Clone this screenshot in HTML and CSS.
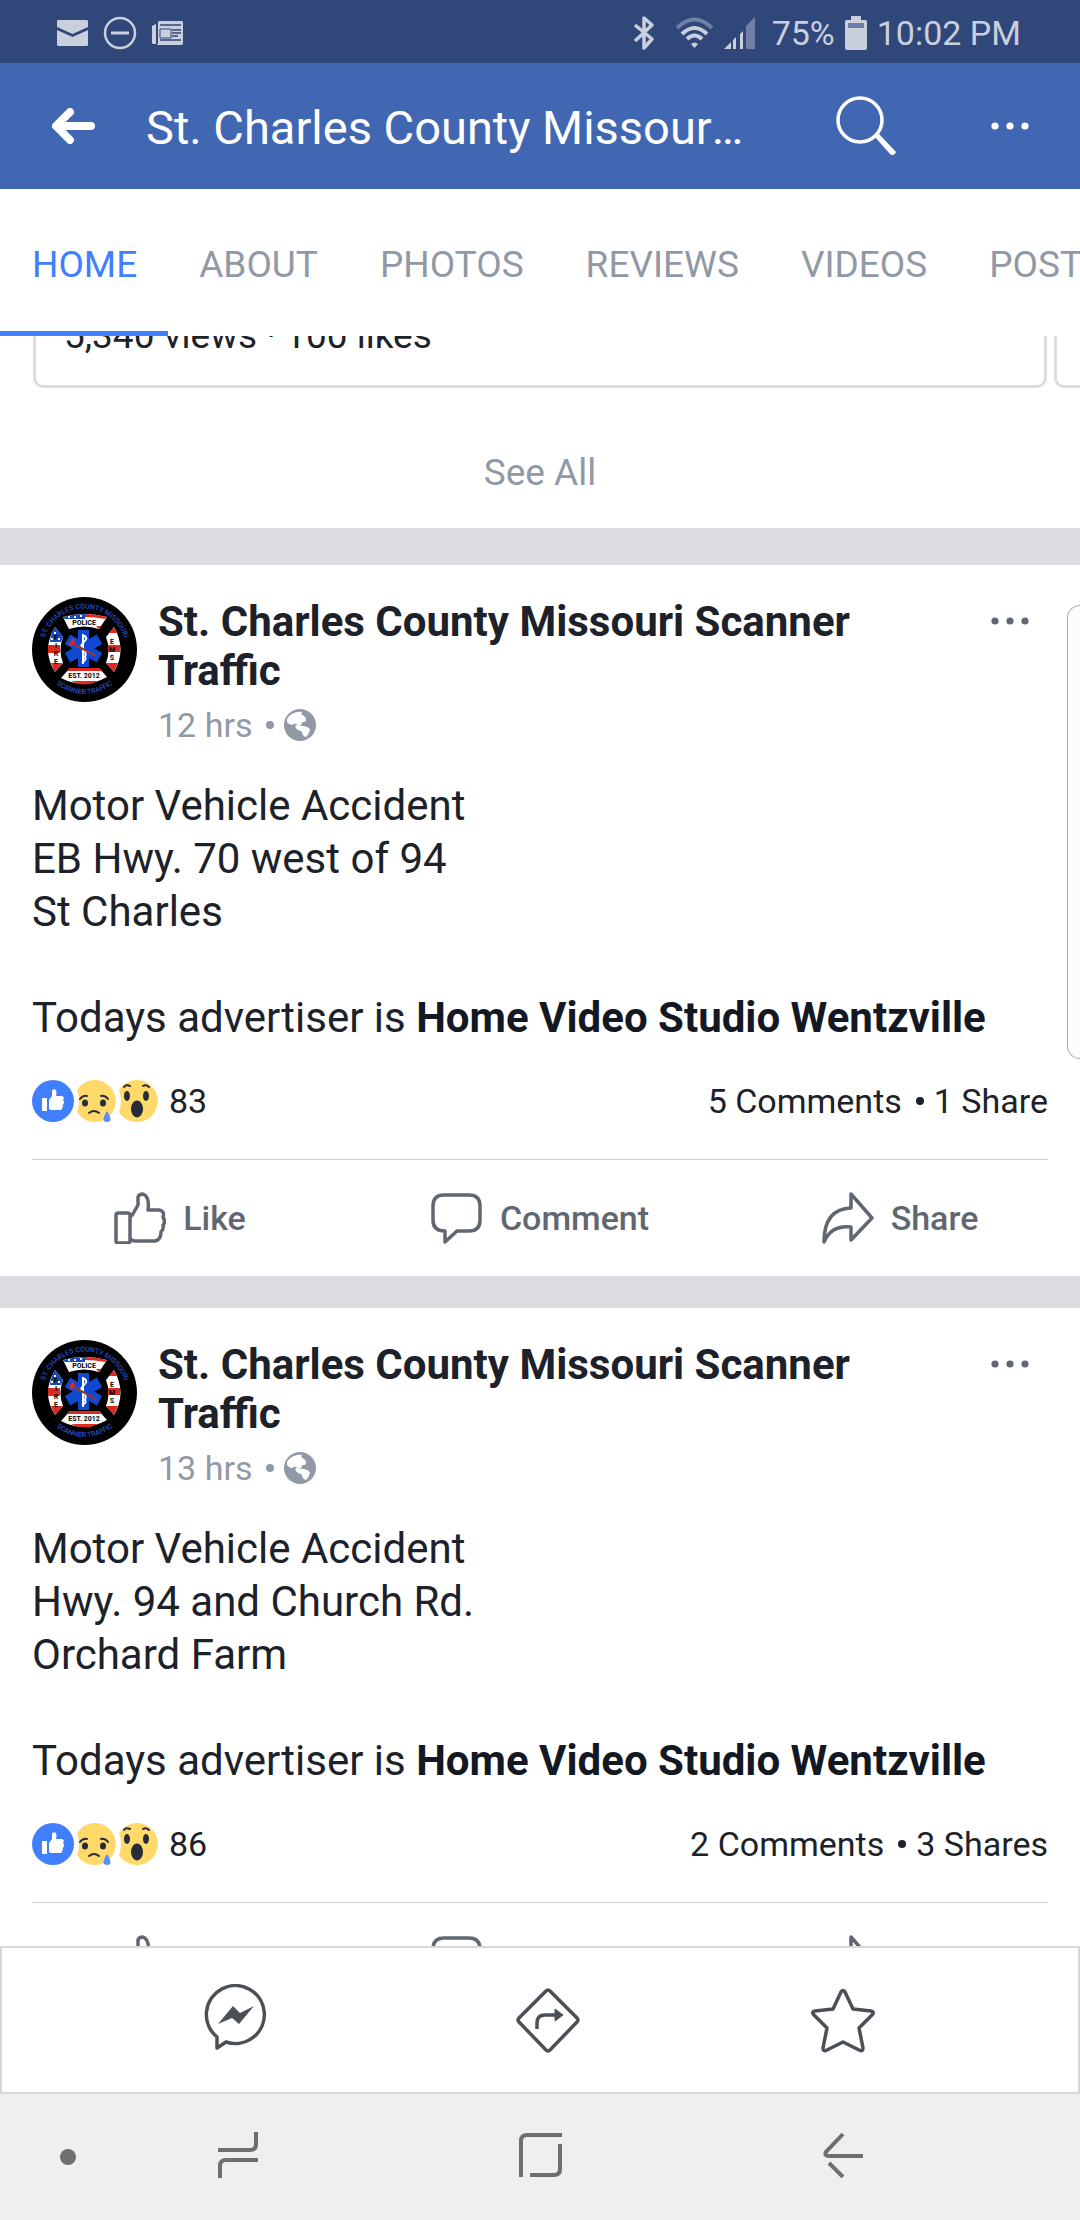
FILE: index.html
```html
<!DOCTYPE html>
<html lang="en">
<head>
<meta charset="utf-8">
<meta name="viewport" content="width=device-width, initial-scale=1">
<title>St. Charles County Missouri Scanner Traffic</title>
<link rel="stylesheet" href="styles.css">
</head>
<body>
<svg class="sprite" aria-hidden="true">
  <defs>
    <path id="arc-top" d="M11 53A41.500 41.500 0 0 1 94 53"/>
    <path id="arc-bottom" d="M16 78A44.500 44.500 0 0 0 89 78"/>
  </defs>
  <symbol id="badge" viewBox="0 0 105 105">
    <circle cx="52.500" cy="52.500" r="52.500" fill="#000"/>
    <path d="M31 20Q52 14 75 20L67 32Q52 27 37 32Z" fill="#fff"/>
    <path d="M31 20Q42 17 53 17V22H33Z" fill="#1649c0"/>
    <path d="M53 17Q64 17 75 20L73 22Q63 20 53 20ZM64 29H69L67 32Z" fill="#dc2a1c"/>
    <path d="M36 20h2M42 20h2M48 19h2" stroke="#fff" stroke-width="2"/>
    <path d="M29 81L38 71H67L75 80Q52 93 29 81Z" fill="#fff"/>
    <path d="M35 74L38 71H67L70 74ZM39 84H66Q53 91 39 84Z" fill="#dc2a1c"/>
    <path d="M23 30L31 40Q26 53 31 66L23 75Q9 53 23 30Z" fill="#fff"/>
    <path d="M23 30L31 40L29 45H18Q19 36 23 30ZM21 70H27L23 75Z" fill="#1649c0"/>
    <path d="M16 48H28V56H16ZM19 66H31L23 75Z" fill="#dc2a1c"/>
    <path d="M22 36h2M19 42h2M26 42h2" stroke="#fff" stroke-width="2"/>
    <path d="M82 30L74 40Q79 53 74 66L82 75Q95 53 82 30Z" fill="#fff"/>
    <path d="M82 30L77 36H85ZM76 48H88V55H76ZM74 66H86L82 75Z" fill="#dc2a1c"/>
    <g fill="#1148d2">
      <rect x="46" y="33" width="11" height="37"/>
      <rect x="46" y="33" width="11" height="37" transform="rotate(60 51.500 51.500)"/>
      <rect x="46" y="33" width="11" height="37" transform="rotate(120 51.500 51.500)"/>
    </g>
    <path d="M51 37V67M51 38Q57 41 52 45T51 52T53 60Q55 63 50 65" fill="none" stroke="#fff" stroke-width="2"/>
    <path d="M38 45L64 59" stroke="#8d3b3a" stroke-width="2"/>
    <path d="M37 48L41 41L43 45L40 49Z" fill="#dc2a1c"/>
  </symbol>
  <symbol id="globe" viewBox="0 0 32 32">
    <circle cx="16" cy="16" r="16" fill="#9299a6"/>
    <path d="M3 10C6 5 12 2 18 3C16 5 19 6 21 8C23 11 22 13 19 13C16 14 19 15 17 16C15 17 12 14 9 15C10 17 5 16 3 13Z" fill="#fff"/>
    <path d="M12 16C15 15 16 17 18 17C22 17 26 19 26 21C25 24 24 26 22 28C18 27 19 24 17 22C13 21 10 18 12 16Z" fill="#fff"/>
  </symbol>
  <symbol id="dots" viewBox="0 0 40 10">
    <circle cx="5" cy="5" r="3.600"/><circle cx="20" cy="5" r="3.600"/><circle cx="35" cy="5" r="3.600"/>
  </symbol>
  <symbol id="r-like" viewBox="0 0 42 42">
    <circle cx="21" cy="21" r="21" fill="#4080ff"/>
    <path d="M10 18h5v13h-5ZM17 20L20 16V11Q21 8 24 10Q25 13 24 16H30Q33 17 31 20Q33 22 31 25Q31 28 29 30H19L17 29Z" fill="#fff"/>
  </symbol>
  <symbol id="r-sad" viewBox="0 0 42 42">
    <path d="M3 10A21 21 0 1 1 3 32Q7 21 3 10Z" fill="#ffda6b"/>
    <path d="M6 19Q9 15 13 16M34 19Q31 15 27 16M15 33Q20 29 25 33" fill="none" stroke="#262c38" stroke-width="2" stroke-linecap="round"/>
    <ellipse cx="11" cy="23" rx="3" ry="3.500" fill="#262c38"/><ellipse cx="29" cy="23" rx="3" ry="3.500" fill="#262c38"/>
    <path d="M33 31Q40 42 33 42Q26 42 33 31Z" fill="#5890ff"/>
  </symbol>
  <symbol id="r-wow" viewBox="0 0 42 42">
    <path d="M3 10A21 21 0 1 1 3 32Q7 21 3 10Z" fill="#ffda6b"/>
    <path d="M8 7Q10 4 14 6M33 7Q30 4 27 6" fill="none" stroke="#262c38" stroke-width="2" stroke-linecap="round"/>
    <ellipse cx="11" cy="16" rx="3" ry="5" fill="#262c38"/><ellipse cx="30" cy="16" rx="3" ry="5" fill="#262c38"/>
    <ellipse cx="21" cy="29" rx="6" ry="8.500" fill="#262c38"/>
  </symbol>
  <symbol id="a-like" viewBox="0 0 52 52">
    <path d="M4 21H13Q16 21 16 23V49Q16 51 14 51H4Q2 51 2 49V23Q2 21 4 21ZM16 25Q19 23 20 20L24 13V5Q25 2 29 2Q36 5 34 18H45Q51 19 49 25Q52 30 49 33Q50 37 47 40Q47 48 41 49H20L16 47" fill="none" stroke="#616770" stroke-width="3.500" stroke-linejoin="round"/>
  </symbol>
  <symbol id="a-comment" viewBox="0 0 52 52">
    <path d="M13 3H38Q49 3 49 14V28Q49 39 38 39H26L14 50V39Q2 39 2 28V14Q2 3 13 3Z" fill="none" stroke="#616770" stroke-width="3.500" stroke-linejoin="round"/>
  </symbol>
  <symbol id="a-share" viewBox="0 0 52 52">
    <path d="M29 2L50 26L29 48V35Q9 33 2 50Q2 17 29 16Z" fill="none" stroke="#616770" stroke-width="3.500" stroke-linejoin="round"/>
  </symbol>
</svg>

<div class="screen">
  <div class="status">
    <div class="status-side">
      <svg width="31" height="26" viewBox="0 0 31 26"><path d="M0 1Q0 0 1 0H30L31 1V7L15.500 14L0 7ZM0 10L15.500 17L31 10V25L30 26H1L0 25Z" fill="#cacfde"/></svg>
      <svg width="34" height="34" viewBox="0 0 34 34" fill="none" stroke="#cacfde" stroke-width="2.500"><circle cx="17" cy="17" r="15"/><path d="M8 17H26" stroke-width="3"/></svg>
      <svg width="31" height="24" viewBox="0 0 31 24"><path d="M0 5L4 3V23H1L0 22ZM6 1L7 0H30L31 1V23L30 24H5L6 22Z" fill="#cacfde"/><path d="M8 4H29M20 9H29M20 12H29M20 15H26M8 19H29" stroke="#30477a" stroke-width="1.500"/><path d="M8 8H19V17H8Z" fill="#cacfde" stroke="#30477a"/></svg>
    </div>
    <div class="status-side">
      <svg class="bt" width="22" height="34" viewBox="0 0 22 34"><path d="M2 9L19 23L11 32V2L19 9L2 25" fill="none" stroke="#cacfde" stroke-width="3.500" stroke-linejoin="round"/></svg>
      <svg class="wifi" width="39" height="32" viewBox="0 0 39 32" fill="none" stroke="#cacfde" stroke-width="4"><path d="M2 11Q19.500 -6 37 11" stroke="#6f7fa6"/><path d="M7 17Q19.500 5 32 17M12 22Q19.500 15 27 22"/><path d="M16 27Q19.500 24 23 27L19.500 31Z" fill="#cacfde" stroke="none"/></svg>
      <svg class="signal" width="32" height="32" viewBox="0 0 32 32"><path d="M22 9L31 0V32H22Z" fill="#6f7fa6"/><path d="M0 32L7 25V32ZM9 23L12 20V32H9ZM16 17L19 14V32H16Z" fill="#cacfde"/></svg>
      <span class="level">75%</span>
      <svg class="battery" width="22" height="34" viewBox="0 0 22 34"><path d="M6 0H16V4H20Q22 4 22 6V32Q22 34 20 34H2Q0 34 0 32V6Q0 4 2 4H6Z" fill="#cacfde"/><path d="M3 7H19V12H3Z" fill="#6f7fa6"/></svg>
      <time>10:02 PM</time>
    </div>
  </div>

  <header class="appbar">
    <button class="icon-btn" aria-label="Back"><svg width="44" height="36" viewBox="0 0 44 36" fill="none" stroke="#fff" stroke-width="8" stroke-linecap="round" stroke-linejoin="round"><path d="M18 4L4 18L18 32M5 18H39"/></svg></button>
    <h1>St. Charles County Missouri Scanner Traffic</h1>
    <button class="icon-btn" aria-label="Search"><svg width="60" height="62" viewBox="0 0 60 62" fill="none" stroke="#fff"><circle cx="24" cy="25" r="22" stroke-width="3.500"/><path d="M39 42L54 59Q58 62 60 57L43 39Z" fill="#fff" stroke="none"/></svg></button>
    <button class="icon-btn" aria-label="More"><svg width="40" height="10" fill="#fff"><use href="#dots"/></svg></button>
  </header>

  <nav class="tabs" aria-label="Page sections">
    <a class="tab active" href="#home">HOME</a>
    <a class="tab" href="#about">ABOUT</a>
    <a class="tab" href="#photos">PHOTOS</a>
    <a class="tab" href="#reviews">REVIEWS</a>
    <a class="tab" href="#videos">VIDEOS</a>
    <a class="tab" href="#posts">POSTS</a>
  </nav>

  <main class="feed">
    <section class="videos">
      <div class="video-row">
        <div class="video-card">5,340 views · 100 likes</div>
        <div class="video-card"></div>
      </div>
      <button class="see-all">See All</button>
    </section>

    <article class="post">
      <div class="post-head">
        <svg class="avatar" viewBox="0 0 105 105">
          <use href="#badge"/>
          <text class="badge-ring"><textPath href="#arc-top" startOffset="50%">ST. CHARLES COUNTY MISSOURI</textPath></text>
          <text class="badge-ring"><textPath href="#arc-bottom" startOffset="50%">SCANNER TRAFFIC</textPath></text>
          <text class="badge-label" x="52" y="28">POLICE</text>
          <text class="badge-label" x="52" y="81">EST. 2012</text>
          <text class="badge-label"><tspan x="24" y="43">F</tspan><tspan x="24" y="51">I</tspan><tspan x="24" y="59">R</tspan><tspan x="24" y="67">E</tspan></text>
          <text class="badge-label"><tspan x="80" y="47">E</tspan><tspan x="80" y="55">M</tspan><tspan x="80" y="63">S</tspan></text>
        </svg>
        <div class="who">
          <h2>St. Charles County Missouri Scanner Traffic</h2>
          <p class="meta">12 hrs <span class="bullet"></span> <svg class="globe"><use href="#globe"/></svg></p>
        </div>
        <button class="icon-btn post-more" aria-label="Post options"><svg width="40" height="10" fill="#616770"><use href="#dots"/></svg></button>
      </div>
      <p class="text">Motor Vehicle Accident<br>EB Hwy. 70 west of 94<br>St Charles<br><br>Todays advertiser is <strong>Home Video Studio Wentzville</strong></p>
      <div class="stats">
        <svg class="reaction"><use href="#r-like"/></svg><svg class="reaction"><use href="#r-sad"/></svg><svg class="reaction"><use href="#r-wow"/></svg>
        <span class="count">83</span>
        <span class="totals">5 Comments <span class="bullet"></span> 1 Share</span>
      </div>
      <div class="actions">
        <button class="action"><svg><use href="#a-like"/></svg>Like</button>
        <button class="action"><svg><use href="#a-comment"/></svg>Comment</button>
        <button class="action"><svg><use href="#a-share"/></svg>Share</button>
      </div>
    </article>

    <article class="post">
      <div class="post-head">
        <svg class="avatar" viewBox="0 0 105 105">
          <use href="#badge"/>
          <text class="badge-ring"><textPath href="#arc-top" startOffset="50%">ST. CHARLES COUNTY MISSOURI</textPath></text>
          <text class="badge-ring"><textPath href="#arc-bottom" startOffset="50%">SCANNER TRAFFIC</textPath></text>
          <text class="badge-label" x="52" y="28">POLICE</text>
          <text class="badge-label" x="52" y="81">EST. 2012</text>
          <text class="badge-label"><tspan x="24" y="43">F</tspan><tspan x="24" y="51">I</tspan><tspan x="24" y="59">R</tspan><tspan x="24" y="67">E</tspan></text>
          <text class="badge-label"><tspan x="80" y="47">E</tspan><tspan x="80" y="55">M</tspan><tspan x="80" y="63">S</tspan></text>
        </svg>
        <div class="who">
          <h2>St. Charles County Missouri Scanner Traffic</h2>
          <p class="meta">13 hrs <span class="bullet"></span> <svg class="globe"><use href="#globe"/></svg></p>
        </div>
        <button class="icon-btn post-more" aria-label="Post options"><svg width="40" height="10" fill="#616770"><use href="#dots"/></svg></button>
      </div>
      <p class="text">Motor Vehicle Accident<br>Hwy. 94 and Church Rd.<br>Orchard Farm<br><br>Todays advertiser is <strong>Home Video Studio Wentzville</strong></p>
      <div class="stats">
        <svg class="reaction"><use href="#r-like"/></svg><svg class="reaction"><use href="#r-sad"/></svg><svg class="reaction"><use href="#r-wow"/></svg>
        <span class="count">86</span>
        <span class="totals">2 Comments <span class="bullet"></span> 3 Shares</span>
      </div>
      <div class="actions">
        <button class="action"><svg><use href="#a-like"/></svg>Like</button>
        <button class="action"><svg><use href="#a-comment"/></svg>Comment</button>
        <button class="action"><svg><use href="#a-share"/></svg>Share</button>
      </div>
    </article>
  </main>

  <div class="page-actions">
    <button class="icon-btn" aria-label="Message"><svg width="64" height="72" viewBox="0 0 64 72"><path d="M13 53A29 29 0 1 1 22 58L13 64Z" fill="none" stroke="#4b4f56" stroke-width="3.500" stroke-linejoin="round"/><path d="M14 40L29 22L36 29L50 22L35 40L28 34Z" fill="#4b4f56"/></svg></button>
    <button class="icon-btn" aria-label="Directions"><svg width="64" height="66" viewBox="0 0 64 66"><path d="M30 4Q32 2 34 4L61 31Q63 33 61 35L34 63Q32 65 30 63L3 35Q1 33 3 31Z" fill="none" stroke="#4b4f56" stroke-width="3.500"/><path d="M21 42V36Q21 28 29 28H40" fill="none" stroke="#4b4f56" stroke-width="3.500"/><path d="M39 22L47 28L39 34Z" fill="#4b4f56" stroke="#4b4f56" stroke-linejoin="round"/></svg></button>
    <button class="icon-btn" aria-label="Save"><svg width="64" height="66" viewBox="0 0 64 66"><path d="M30 5Q32 2 34 5L42 22L60 24Q64 25 61 28L48 41L52 61Q52 65 48 63L32 55L16 63Q12 65 12 61L16 41L3 28Q0 25 4 24L22 22Z" fill="none" stroke="#4b4f56" stroke-width="3.500" stroke-linejoin="round"/></svg></button>
  </div>

  <nav class="sysnav" aria-label="System">
    <span class="pin"></span>
    <button class="icon-btn" aria-label="Recent apps"><svg width="40" height="46" viewBox="0 0 40 46" fill="none" stroke="#6f6f6f" stroke-width="4"><path d="M38 0V12Q38 18 32 18H0M40 28H8Q2 28 2 34V46"/></svg></button>
    <button class="icon-btn" aria-label="Home screen"><svg width="43" height="44" viewBox="0 0 43 44" fill="none" stroke="#6f6f6f" stroke-width="4"><path d="M2 44V8Q2 2 8 2H43M41 11V36Q41 42 35 42H11"/></svg></button>
    <button class="icon-btn" aria-label="Go back"><svg width="40" height="46" viewBox="0 0 40 46" fill="none" stroke="#6f6f6f" stroke-width="4"><path d="M20 2L3 20Q1 24 6 24H40M6 31L20 45"/></svg></button>
  </nav>

  <div class="edge-handle"></div>
</div>
</body>
</html>
```
FILE: styles.css
```css
* {
  box-sizing: border-box;
}

body {
  margin: 0;
  font-family: Roboto, "Liberation Sans", sans-serif;
  color: #1d2129;
  background: #fff;
}

h1, h2, p {
  margin: 0;
}

button {
  font: inherit;
  color: inherit;
  background: none;
  border: 0;
  padding: 0;
}

svg {
  display: block;
  flex: none;
}

.sprite {
  position: absolute;
  width: 0;
  height: 0;
}

.screen {
  position: relative;
  display: flex;
  flex-direction: column;
  height: 100vh;
  overflow: hidden;
}

.icon-btn {
  display: flex;
  align-items: center;
  justify-content: center;
}

/* Status bar */
.status {
  flex: none;
  display: flex;
  align-items: center;
  justify-content: space-between;
  height: 63px;
  padding: 3px 59px 0 57px;
  background: #30477a;
  color: #cacfde;
  font-size: 34px;
  line-height: 44px;
}

.status-side {
  display: flex;
  align-items: center;
  gap: 15px;
}

.status-side + .status-side {
  gap: 10px;
}

.bt {
  margin-right: 10px;
}

.signal {
  margin-right: 6px;
}

/* Title bar */
.appbar {
  flex: none;
  display: flex;
  align-items: center;
  height: 126px;
  padding: 0 50px 0 52px;
  background: #4267b2;
  color: #fff;
}

.appbar h1 {
  flex: 1;
  margin: 4px 88px 0 50px;
  overflow: hidden;
  white-space: nowrap;
  text-overflow: ellipsis;
  font-size: 47px;
  line-height: 60px;
  font-weight: 400;
}

.appbar .icon-btn:last-child {
  margin-left: 94px;
}

/* Section tabs */
.tabs {
  flex: none;
  display: flex;
  overflow: hidden;
  height: 147px;
}

.tab {
  flex: none;
  padding: 54px 31px 0;
  color: #9299a6;
  font-size: 37px;
  line-height: 44px;
  text-decoration: none;
}

.tab.active {
  padding-left: 32px;
  color: #4080ff;
  border-bottom: 5px solid #4080ff;
}

/* Feed, scrolled part-way into the video list */
.feed {
  flex: 1;
  min-height: 0;
  overflow: hidden;
  background: #dcdde2;
}

.videos {
  margin-top: -46px;
  margin-bottom: 37px;
  background: #fff;
}

.video-row {
  display: flex;
  gap: 7px;
  padding-left: 33px;
  overflow: hidden;
}

.video-card {
  flex: none;
  width: calc(100% - 33px);
  padding: 21px 28px 27px;
  border: 3px solid #dcdde2;
  border-radius: 10px;
  font-size: 37px;
  line-height: 44px;
}

.see-all {
  display: block;
  width: 100%;
  padding: 63px 0 33px;
  color: #9299a6;
  font-size: 37px;
  line-height: 44px;
}

.post {
  margin-bottom: 32px;
  padding-top: 32px;
  background: #fff;
}

.post-head {
  display: flex;
  align-items: flex-start;
  padding: 0 50px 0 32px;
}

.avatar {
  width: 105px;
  height: 105px;
}

.who {
  flex: 1;
  margin: 0 90px 0 21px;
}

.who h2 {
  font-size: 42px;
  line-height: 49px;
  font-weight: 700;
}

.meta {
  display: flex;
  align-items: center;
  margin-top: 10px;
  color: #9299a6;
  font-size: 34px;
  line-height: 40px;
}

.bullet {
  display: inline-block;
  width: 8px;
  height: 8px;
  margin: 0 10px 0 14px;
  border-radius: 50%;
  background: currentColor;
}

.globe {
  width: 32px;
  height: 32px;
}

.post-more {
  height: 48px;
}

.text {
  margin: 34px 32px 36px;
  font-size: 42px;
  line-height: 53px;
}

.text strong {
  color: #141823;
}

.stats {
  display: flex;
  align-items: center;
  margin: 0 32px;
  padding-bottom: 37px;
  border-bottom: 1px solid #cfd0d3;
  font-size: 34px;
  line-height: 42px;
}

.reaction {
  width: 42px;
  height: 42px;
}

.count {
  margin-left: 11px;
}

.totals {
  display: flex;
  align-items: center;
  margin-left: auto;
}

.actions {
  display: grid;
  grid-template-columns: repeat(3, 1fr);
  height: 116px;
}

.action {
  display: flex;
  align-items: center;
  justify-content: center;
  gap: 17px;
  color: #616770;
  font-size: 34px;
  font-weight: 500;
}

.action svg {
  width: 52px;
  height: 52px;
}

.badge-ring {
  fill: #2a4fc0;
  font: 500 7px Roboto, sans-serif;
  text-anchor: middle;
}

.badge-label {
  fill: #000;
  font: 700 7px Roboto, sans-serif;
  text-anchor: middle;
}

/* Page shortcuts */
.page-actions {
  flex: none;
  display: grid;
  grid-template-columns: 312fr 312fr 278fr;
  height: 148px;
  padding: 0 96px 0 78px;
  border: 2px solid #d8d8d8;
  background: #fff;
}

/* System navigation */
.sysnav {
  flex: none;
  display: grid;
  grid-template-columns: 38px 1fr 1fr 1fr;
  align-items: center;
  height: 126px;
  padding: 0 86px 4px 49px;
  background: #efefef;
}

.pin {
  width: 16px;
  height: 16px;
  margin: 4px auto 0;
  border-radius: 50%;
  background: #6f6f6f;
}

/* Pull-out panel tab lying over the feed */
.edge-handle {
  position: absolute;
  top: 605px;
  right: 0;
  width: 13px;
  height: 454px;
  border: 1px solid #b0b0b0;
  border-right: 0;
  border-radius: 18px 0 0 18px;
  background: #fcfcfc;
}
```
